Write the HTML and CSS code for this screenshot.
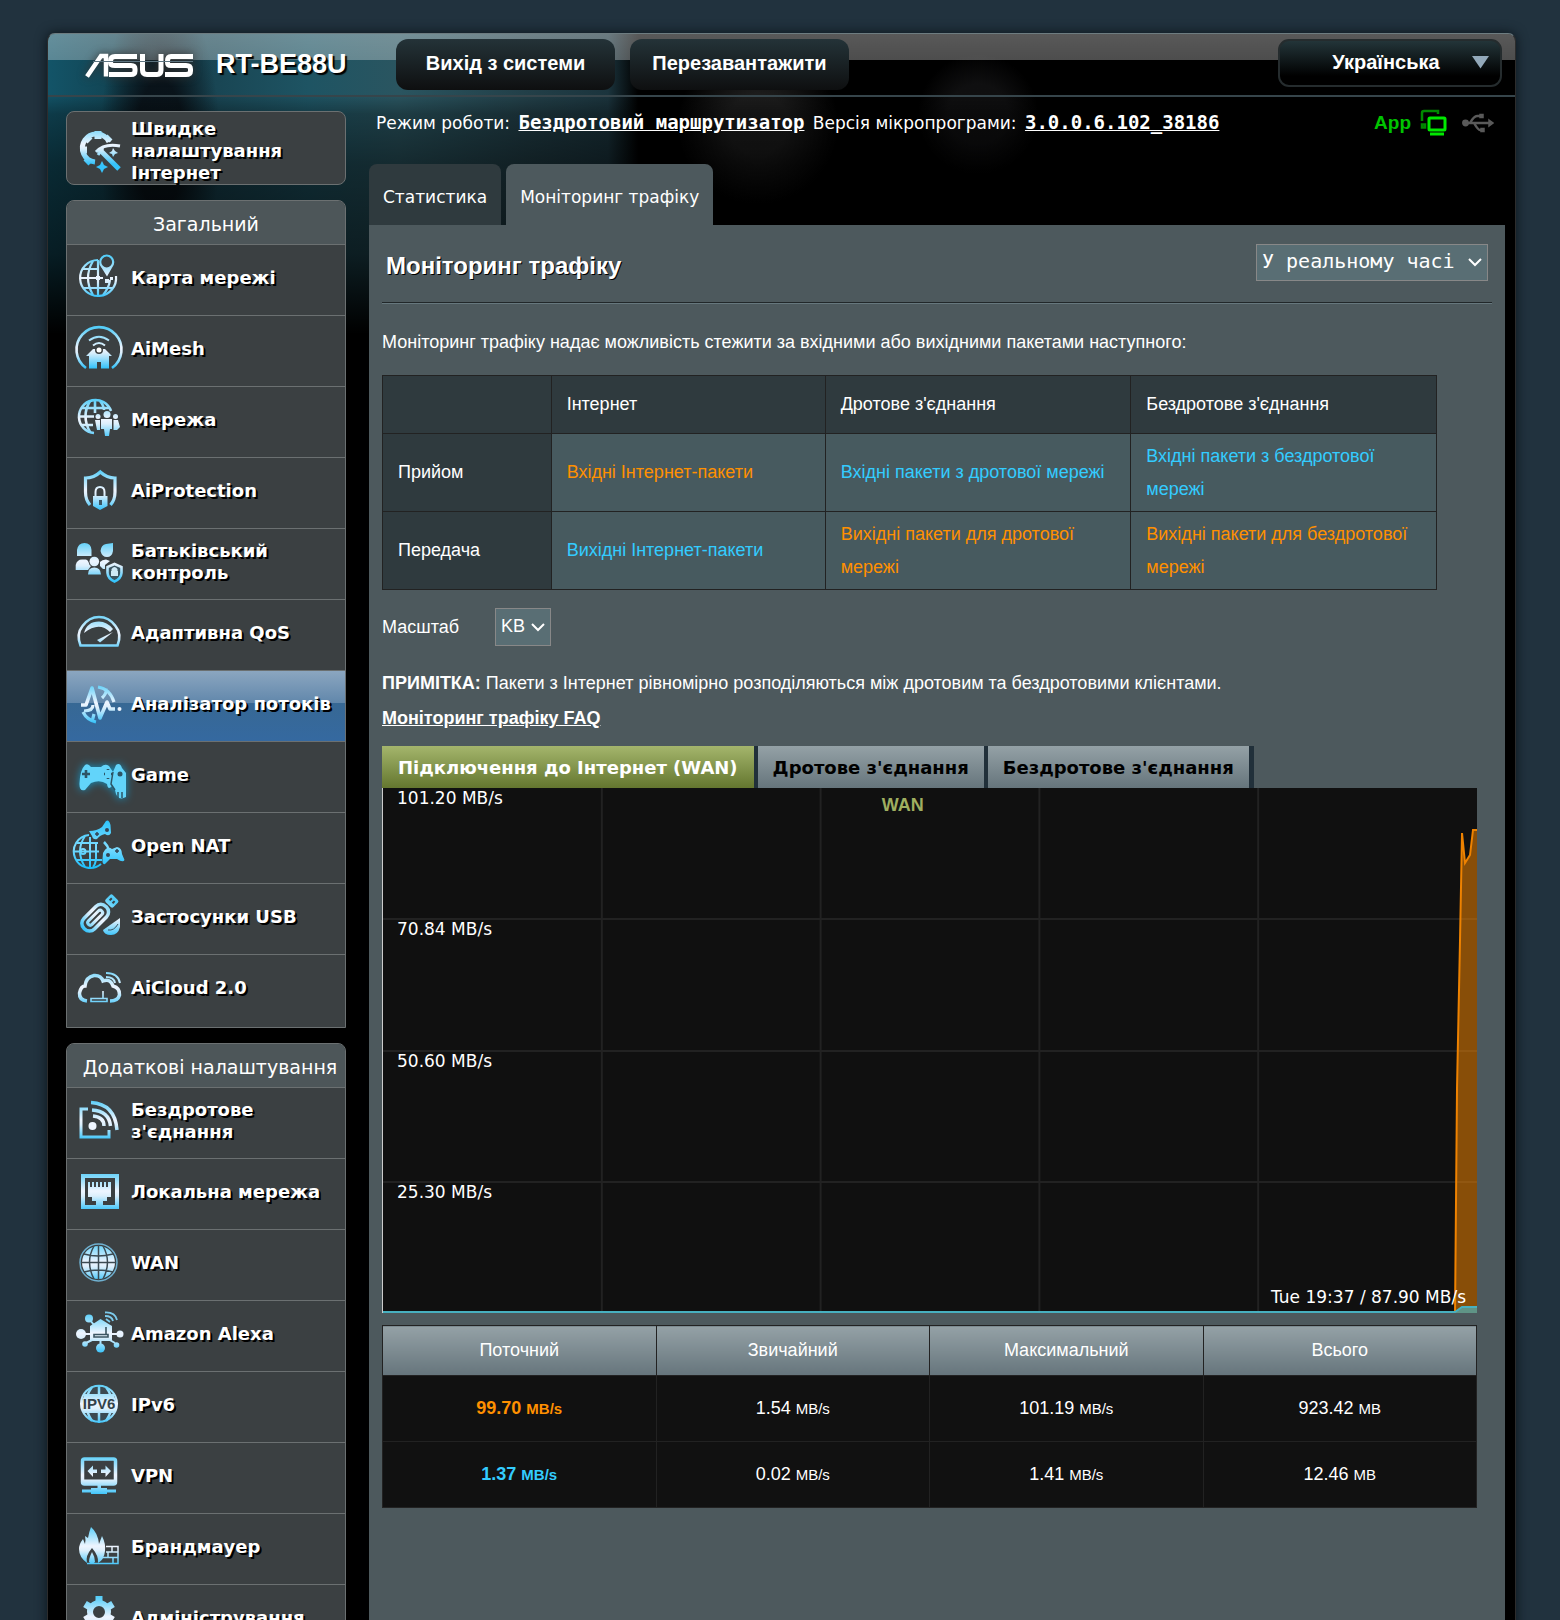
FILE: index.html
```html
<!DOCTYPE html>
<html lang="uk">
<head>
<meta charset="utf-8">
<meta name="viewport" content="width=device-width, initial-scale=1">
<title>RT-BE88U - Моніторинг трафіку</title>
<link rel="stylesheet" href="styles.css">
</head>
<body>
<svg class="defs" aria-hidden="true">
  <defs>
    <linearGradient id="ice" gradientUnits="userSpaceOnUse" x1="0" y1="12" x2="0" y2="52">
      <stop offset="0" stop-color="#55cdf8"/><stop offset=".5" stop-color="#eef5ff"/><stop offset=".62" stop-color="#dceffc"/><stop offset="1" stop-color="#35c3fb"/>
    </linearGradient>
    <linearGradient id="cyan" gradientUnits="userSpaceOnUse" x1="0" y1="8" x2="0" y2="56">
      <stop offset="0" stop-color="#2fc4fb"/><stop offset=".55" stop-color="#7ddcff"/><stop offset="1" stop-color="#16bdfb"/>
    </linearGradient>
  </defs>
</svg>
<div class="frame">
  <header class="topbar">
    <svg class="logo" viewBox="0 0 110 26" role="img" aria-label="ASUS" fill="none" stroke="#fff" stroke-width="5">
      <path d="M2 23.500 16 3H21V23.500" stroke-width="4.500"/>
      <path d="M52 3.500H30Q25.500 3.500 25.500 8V9.500Q25.500 12.500 30 12.500H46Q50 12.500 50 16V18Q50 21.500 46 21.500H24"/>
      <path d="M57.500 1V17Q57.500 21.500 62 21.500H72Q76 21.500 76 17V1"/>
      <path d="M108 3.500H86Q82.500 3.500 82.500 8V9.500Q82.500 12.500 86 12.500H101Q105.500 12.500 105.500 16V18Q105.500 21.500 101 21.500H80"/>
      <path d="M8 8.500H108" stroke="#5c7480" stroke-width="1"/>
    </svg>
    <h1 class="model">RT-BE88U</h1>
    <button class="topbtn" type="button">Вихід з системи</button>
    <button class="topbtn" type="button">Перезавантажити</button>
    <button class="lang" type="button"><span>Українська</span><svg width="17" height="13" viewBox="0 0 17 13" aria-hidden="true"><path d="M0 0H17L8.500 12.500Z" fill="#93a9ba"/></svg></button>
  </header>

  <div class="columns">
    <aside class="sidebar">
      <a class="item quick" href="#"><svg class="icon" viewBox="0 0 56 72"><g fill="none" stroke="url(#ice)"><path d="M37 30A14 14 0 1 0 23 50" stroke-width="5"/><path d="M26 19V27M14 25 18 29M9 38H15M14 51 18 47M38 25 35 28" stroke-width="7"/><path d="M28 38 47 57" stroke-width="5"/><path d="M24 40Q32 31 48 34M31 36 26 43" stroke-width="3"/></g><path d="M30 49 32 53 36 55 32 57 30 61 28 57 24 55 28 53ZM41 36 43 39 46 41 43 42 41 45 40 42 37 41 40 39Z" fill="url(#ice)"/></svg><span>Швидке налаштування Інтернет</span></a>

      <nav class="menu" aria-labelledby="m1">
        <h2 id="m1">Загальний</h2>
        <a class="item" href="#"><svg class="icon" viewBox="0 0 56 70"><g fill="none" stroke="url(#ice)" stroke-width="2.200"><path d="M26 15A18 18 0 1 0 44 31"/><path d="M8 33H31M11 24H27M12 43H41M26 15V51M21 16Q11 33 21 50M31 50Q37 43 38 35"/><circle cx="34.700" cy="17" r="6.500"/></g><path d="M28.500 21Q34.700 27 41 21L35 31.500Z" fill="url(#ice)"/><path d="M33 34h4v4h-4zM24 31h4v4h-4zM38 32h3v3h-3z" fill="url(#ice)"/></svg><span>Карта мережі</span></a>
        <a class="item" href="#"><svg class="icon" viewBox="0 0 56 70"><g fill="none" stroke="url(#ice)" stroke-width="2.600"><path d="M14 52A22.500 22.500 0 1 1 40 52"/><path d="M17 24.500Q27 17 37 24.500M21 29.500Q27 24.500 33 29.500" stroke-width="2"/></g><path d="M14 40 21 33H33L40 40H37V52.500H29V46H25V52.500H17V40Z" fill="url(#ice)"/><circle cx="27" cy="34" r="4" fill="#3b4042"/><circle cx="27" cy="34" r="2.500" fill="#fff"/></svg><span>AiMesh</span></a>
        <a class="item" href="#"><svg class="icon" viewBox="0 0 56 70"><g fill="none" stroke="url(#ice)" stroke-width="2.600"><path d="M39 24A16.500 16.500 0 1 0 22 46"/><path d="M7 29.500H22M10 21H37M10 38H21M23 13V26M18 14Q9 29 18 45M28 14Q32 19 32 23"/></g><g fill="url(#ice)"><circle cx="35" cy="27.500" r="3.500"/><circle cx="26" cy="29.500" r="2.500"/><circle cx="43.500" cy="29.500" r="2.500"/><path d="M29 32H40V42H38L37 49H33L32 42H29ZM23 33H28V43H25ZM41.500 33H46L48 40 45 43H41.500Z"/></g></svg><span>Мережа</span></a>
        <a class="item" href="#"><svg class="icon" viewBox="0 0 56 70"><g fill="none" stroke="url(#ice)" stroke-width="3.200"><path d="M18 47Q13.500 42 13.500 34V20Q22 20 28.300 14 35 20 43 20V34Q43 42 38.500 47"/><path d="M23.500 39V34Q23.500 29 28 29T32.500 34V39" stroke-width="2"/></g><path d="M21 38H35.500V48L28 52 21 48Z" fill="url(#ice)"/><path d="M27 42h3v5h-3z" fill="#3b5562"/></svg><span>AiProtection</span></a>
        <a class="item" href="#"><svg class="icon" viewBox="0 0 56 70"><g fill="url(#ice)"><path d="M5 27V21Q6 14 12.500 14T19.500 21V27ZM28.500 22Q29 16 34 15L41 14V22Q40 28 35 28T28.500 22ZM3.700 41V36Q5 30.500 10 30.500H14Q16 31 16.500 33 17 36 19 37L16 41ZM28 33Q30 30.500 34 30.500L38 32 33 36V40H31L28 37Z"/><circle cx="22.300" cy="32.500" r="4.800"/><path d="M16 45.500Q16 38.500 22.300 38.500T29 45.500Z"/></g><path d="M42.500 35 49.500 38V44Q49 50 42.500 52.500 36 50 35.500 44V38Z" fill="#3b5562" stroke="url(#ice)" stroke-width="2.600"/><path d="M39.500 42V40Q42.500 36 45.500 40V42H46V47H39V42Z" fill="#cfe9f6"/></svg><span>Батьківський контроль</span></a>
        <a class="item" href="#"><svg class="icon" viewBox="0 0 56 70"><path d="M8.500 45.500Q4 34 10.500 26 17 17 27 17T43.500 26Q50 34 45.500 45.500Z" fill="none" stroke="url(#ice)" stroke-width="2.600"/><path d="M12 33Q15 21.500 27 21.500 35 21.500 41 29L38 32Q27 21 12 33Z" fill="url(#ice)"/><path d="M25 40 41 32 28 42.500Z" fill="url(#ice)"/></svg><span>Адаптивна QoS</span></a>
        <a class="item current" href="#" aria-current="page"><svg class="icon" viewBox="0 0 56 70"><g fill="none" stroke="url(#ice)"><path d="M9 34H14L20 17 28 47 35 31 38 38H43" stroke-width="3.600" stroke-linejoin="round"/><path d="M26 16Q38 18 42 31M30 27Q35 22 34 18M11 41Q15 49 24 51M12 40Q21 40 21 34M20 51 22 43" stroke-width="3.200"/></g><circle cx="47.500" cy="38" r="2" fill="#eef5ff"/></svg><span>Аналізатор потоків</span></a>
        <a class="item" href="#"><svg class="icon glow" viewBox="0 0 56 70"><path d="M13 23Q16 21 19 25H29Q33 21 37 24L41 30 44 23Q48 20 50 26L54 31V55Q45 60 43 48L40 44Q36 49 35 42 28 37 19 41L13 48Q7 50 7.500 41 8 28 13 23Z" fill="#62d4fa"/><path d="M14 28V36M10 32H18M36 27V28M36 36V37M32 32H33M39 32H40" stroke="#2d5465" stroke-width="2.600"/><circle cx="48" cy="32" r="2.500" fill="#2d5465"/><path d="M41 30 39 42 43 48M46 50V56M50 50V56" stroke="#2d5465" stroke-width="1.500" fill="none"/></svg><span>Game</span></a>
        <a class="item" href="#"><svg class="icon" viewBox="0 0 56 70"><g fill="none" stroke="url(#cyan)" stroke-width="2"><path d="M17 22A16.500 16.500 0 1 0 29 51"/><path d="M2 38.500H27M5 30H26M5 47H30M18 24V55M13 23Q3 38 13 54M24 30V47Q23 52 21 54"/><path d="M32 29Q36 33 37 37" stroke-width="2.500"/><circle cx="11" cy="38.500" r="2.500"/></g><g fill="url(#cyan)"><path d="M17 18Q25 18 30 14L34 8Q37 6 38.500 12L39 20Q37 24 33 21 28 22 25 26 21 27 20 23L17 18Z"/><path d="M31 40Q35 32 40 36L45 34Q50 35 50 41L52.500 47Q51 50 45 46H38L33 51Q30 52 30.500 46Z"/></g><path d="M25 19V23M23 21H27M45 36V40M43 38H47" stroke="#345" stroke-width="1.500"/><circle cx="35" cy="17" r="2" fill="#345"/><circle cx="36" cy="42" r="2" fill="#345"/></svg><span>Open NAT</span></a>
        <a class="item" href="#"><svg class="icon" viewBox="0 0 56 70"><g transform="rotate(45 26 33)"><rect x="17" y="20" width="15" height="31" rx="7" fill="none" stroke="url(#ice)" stroke-width="3.500"/><rect x="22" y="26" width="5" height="19" rx="2.500" fill="none" stroke="url(#ice)" stroke-width="3"/><rect x="19" y="7" width="11" height="10" rx="2" fill="url(#ice)"/><path d="M22.500 10V13M26.500 10V13" stroke="#3b4042" stroke-width="2"/></g><path d="M48 34V43Q46 51 39 51 32 51 31 46Z" fill="url(#ice)"/><path d="M46 40Q42 47 36 46" fill="none" stroke="#3b5562"/></svg><span>Застосунки USB</span></a>
        <a class="item" href="#"><svg class="icon" viewBox="0 0 56 70"><g fill="none" stroke="url(#ice)"><path d="M15 46Q7 45 7.500 38 9 31 13 31 14 22 22 20.500 29 20 31 26 38 23 41 31 48 33 47.500 40 46 46 38 46" stroke-width="3.500"/><path d="M34 18Q46 18 48 28M34 22Q42 22 43 28" stroke-width="2"/><path d="M19 43.500H35V46.500H19ZM31 36V43" stroke-width="1.600"/></g></svg><span>AiCloud 2.0</span></a>
      </nav>

      <nav class="menu" aria-labelledby="m2">
        <h2 id="m2" class="wide">Додаткові налаштування</h2>
        <a class="item" href="#"><svg class="icon" viewBox="0 0 56 70"><g fill="none" stroke="url(#ice)" stroke-width="3"><path d="M16 21H9V49H37V42"/><path d="M19 14.500Q43 16 45 42M20 22Q37 23 38.500 38M21 28Q32 29 32 38" stroke-width="3.500"/></g><circle cx="20.500" cy="38" r="4" fill="#eef5ff"/></svg><span>Бездротове з'єднання</span></a>
        <a class="item" href="#"><svg class="icon" viewBox="0 0 56 70"><rect x="11" y="17" width="34" height="31" fill="none" stroke="url(#ice)" stroke-width="4"/><path d="M16 23H18V28H20V23H22V28H24V23H26V28H28V23H30V28H32V23H34V28H36V23H39V38H35V42H31V46H24V42H20V38H16Z" fill="url(#ice)"/></svg><span>Локальна мережа</span></a>
        <a class="item" href="#"><svg class="icon" viewBox="0 0 56 70"><circle cx="26.500" cy="32.500" r="18.500" fill="none" stroke="#6fb0d0" stroke-width="1.500"/><circle cx="26.500" cy="32.500" r="16.500" fill="url(#ice)"/><path d="M9 32.500H44M12 24Q26 28 41 24M12 42Q26 38 41 42M26.500 15V50M22 16Q13 32 22 49M31 16Q40 32 31 49" fill="none" stroke="#3b4a52" stroke-width="1.500"/></svg><span>WAN</span></a>
        <a class="item" href="#"><svg class="icon" viewBox="0 0 56 70"><path d="M18 19 22 24M10 33H18M40 33H47M14 42 22 38M28.500 40V46M43 42 36 38" stroke="url(#ice)" stroke-width="2" fill="none"/><path d="M18 25 28.500 18 40 25V40H18Z" fill="url(#ice)"/><g fill="url(#ice)"><circle cx="17" cy="17.500" r="4"/><circle cx="9" cy="33" r="5"/><circle cx="48" cy="33" r="3.500"/><circle cx="13" cy="43" r="2.800"/><circle cx="28.500" cy="47" r="4.500"/><circle cx="44.500" cy="44" r="2.800"/></g><path d="M22 33.500H36V36H22ZM34 26V33" fill="none" stroke="#3b5562" stroke-width="1.600"/><path d="M33 11.500Q43 11 45 19M33 15Q40 15 41 20M34 18 38 21" stroke="#7ccbed" stroke-width="1.800" fill="none"/></svg><span>Amazon Alexa</span></a>
        <a class="item" href="#"><svg class="icon" viewBox="0 0 56 70"><circle cx="27" cy="31.700" r="18" fill="#3b4a52" stroke="url(#ice)" stroke-width="2"/><path d="M27 13V51M20 15Q8 31 20 49M34 15Q46 31 34 49" fill="none" stroke="url(#ice)" stroke-width="2.500"/><path d="M12 22H42V24Q47 32 42 41H12Q7 32 12 24Z" fill="url(#ice)"/><text x="27" y="37" text-anchor="middle" class="v6">IPV6</text></svg><span>IPv6</span></a>
        <a class="item" href="#"><svg class="icon" viewBox="0 0 56 70"><rect x="10.500" y="16" width="33" height="25" rx="2" fill="none" stroke="url(#ice)" stroke-width="3.500"/><path d="M11 36.500H44V40H11ZM15.500 28 21 22.500V26.500H25V30H21V34ZM39 28 33.500 22.500V26.500H29V30H33.500V34ZM25.500 42H29V45H35V46.500H44V49.500H35V51H19V49.500H10V46.500H19V45H25.500Z" fill="url(#ice)"/></svg><span>VPN</span></a>
        <a class="item" href="#"><svg class="icon" viewBox="0 0 56 70"><path d="M15 49Q7 43 7 35 7 30 11 25L13 30Q14 26 13 22L16 24Q17 18 19 13 26 19 27 30L30 22Q34 30 33 37 32 46 26 49 27 42 20 34 13 42 15 49Z" fill="url(#ice)"/><path d="M20 38Q17 44 17 48 20 51 23 48 23 43 20 38Z" fill="url(#ice)"/><path d="M34 32.500H46V49.500H15M34 38H46M30 43.500H46M40 32V38M36 38V44M41 44V49" fill="none" stroke="url(#ice)" stroke-width="1.500"/></svg><span>Брандмауер</span></a>
        <a class="item" href="#"><svg class="icon" viewBox="0 0 56 70"><circle cx="27" cy="27" r="9" fill="none" stroke="url(#ice)" stroke-width="6"/><path d="M27 11V17M13 19 18 22M36 22 41 19M13 35 18 32M36 32 41 35" stroke="url(#ice)" stroke-width="7"/></svg><span>Адміністрування</span></a>
      </nav>
    </aside>

    <main class="main">
      <div class="status">
        <p>Режим роботи: <a href="#">Бездротовий маршрутизатор</a> Версія мікропрограми: <a href="#">3.0.0.6.102_38186</a></p>
        <a class="app" href="#">App</a>
        <svg width="28" height="28" viewBox="0 0 28 28" fill="none" stroke="#00b400" aria-hidden="true"><path d="M18 5V2H4Q2 2 2 4V12M2 15.500H5V18.500H2Z" stroke-width="2.500" stroke="#008800"/><rect x="9" y="9" width="16" height="12" rx="1" stroke="#00e800" stroke-width="3"/><path d="M10 25H24" stroke="#00e800" stroke-width="3"/></svg>
        <svg width="32" height="20" viewBox="0 0 32 20" fill="none" stroke="#5a5a5a" stroke-width="2.500" aria-hidden="true"><circle cx="3.500" cy="10" r="2.200" fill="#5a5a5a"/><path d="M4 10H27M8 10Q12 3 15 3H18M12 10Q16 17 18 17H20"/><path d="M27 7 31 10 27 13ZM18 1.500H21V4.500H18ZM19 15.500H22V18.500H19Z" fill="#5a5a5a" stroke-width="1.500"/></svg>
      </div>

      <nav class="tabs">
        <a href="#">Статистика</a>
        <a class="on" href="#" aria-current="page">Моніторинг трафіку</a>
      </nav>

      <section class="panel">
        <div class="head">
          <h2>Моніторинг трафіку</h2>
          <select class="period" aria-label="Період"><option>У реальному часі</option></select>
        </div>
        <p class="intro">Моніторинг трафіку надає можливість стежити за вхідними або вихідними пакетами наступного:</p>
        <table class="legend">
          <colgroup><col class="c1"><col class="c2"><col class="c3"><col class="c4"></colgroup>
          <thead><tr><th></th><th scope="col">Інтернет</th><th scope="col">Дротове з'єднання</th><th scope="col">Бездротове з'єднання</th></tr></thead>
          <tbody>
            <tr><th scope="row">Прийом</th><td class="orange">Вхідні Інтернет-пакети</td><td class="blue">Вхідні пакети з дротової мережі</td><td class="blue">Вхідні пакети з бездротової мережі</td></tr>
            <tr><th scope="row">Передача</th><td class="blue">Вихідні Інтернет-пакети</td><td class="orange">Вихідні пакети для дротової мережі</td><td class="orange">Вихідні пакети для бездротової мережі</td></tr>
          </tbody>
        </table>
        <div class="scale">
          <label for="scale">Масштаб</label>
          <select id="scale"><option>KB</option></select>
        </div>
        <p class="note"><b>ПРИМІТКА:</b> Пакети з Інтернет рівномірно розподіляються між дротовим та бездротовими клієнтами.</p>
        <p class="note"><a href="#">Моніторинг трафіку FAQ</a></p>

        <div class="sources">
          <button class="on" type="button">Підключення до Інтернет (WAN)</button>
          <button type="button">Дротове з'єднання</button>
          <button type="button">Бездротове з'єднання</button>
        </div>
        <div class="chart">
          <svg viewBox="0 0 1095 525" preserveAspectRatio="none" aria-hidden="true">
            <path d="M219 0V525M438 0V525M657 0V525M876 0V525M0 131H1095M0 263H1095M0 394H1095" stroke="#222" stroke-width="2"/>
            <path d="M1073 525 1075 300 1078 152 1080 45 1083 75 1088 67 1091 42H1095V525Z" fill="#ff8c00" fill-opacity=".5"/>
            <path d="M1073 525 1075 300 1078 152 1080 45 1083 75 1088 67 1091 42H1095" fill="none" stroke="#ee8200" stroke-width="2"/>
            <path d="M1073 525 1079 519H1095V525Z" fill="#5f9486"/>
            <path d="M0 524H1073L1080 519H1095" fill="none" stroke="#47b0c0" stroke-width="2"/>
          </svg>
          <ul class="ticks"><li>101.20 MB/s</li><li>70.84 MB/s</li><li>50.60 MB/s</li><li>25.30 MB/s</li></ul>
          <span class="name">WAN</span>
          <span class="reading">Tue 19:37 / 87.90 MB/s</span>
        </div>
        <table class="totals">
          <thead><tr><th scope="col">Поточний</th><th scope="col">Звичайний</th><th scope="col">Максимальний</th><th scope="col">Всього</th></tr></thead>
          <tbody>
            <tr><td class="orange">99.70 <small>MB/s</small></td><td>1.54 <small>MB/s</small></td><td>101.19 <small>MB/s</small></td><td>923.42 <small>MB</small></td></tr>
            <tr><td class="blue">1.37 <small>MB/s</small></td><td>0.02 <small>MB/s</small></td><td>1.41 <small>MB/s</small></td><td>12.46 <small>MB</small></td></tr>
          </tbody>
        </table>
      </section>
    </main>
  </div>
</div>
</body>
</html>
```
FILE: styles.css
```css
* { box-sizing: border-box; }
body {
  margin: 0;
  height: 100vh;
  overflow: hidden;
  padding: 33px 44px 0 47px;
  background: #21323e;
  color: #fff;
  font: 18px "Liberation Sans", Arial, sans-serif;
}
h1, h2, p, ul { margin: 0; padding: 0; }
a { color: inherit; }
.defs { position: absolute; width: 0; height: 0; }

.frame {
  min-height: 100%;
  border: 1px solid #2c2c2c;
  border-top-color: #6d7c80;
  border-bottom: 0;
  border-radius: 8px 8px 0 0;
  box-shadow: 0 0 12px #0b141a;
  overflow: hidden;
  background:
    linear-gradient(transparent 60px, rgba(0, 0, 0, .3) 80px, rgba(0, 0, 0, .5) 130px, rgba(0, 0, 0, .65) 220px, #000 300px),
    radial-gradient(ellipse 60px 160px at 112px 110px, rgba(8, 14, 20, .9) 40%, transparent),
    radial-gradient(circle at 710px 90px, rgba(40, 40, 40, .7) 30px, transparent 80px),
    radial-gradient(circle at 930px 80px, rgba(30, 30, 32, .5) 30px, transparent 60px),
    linear-gradient(90deg, #135468, #12414f 80px, #194654 170px, #1e5463 260px, #2a5560 350px, #223f48 480px, #1b343d 560px, #000 590px);
}

/* top bar */
.topbar {
  display: flex;
  align-items: flex-start;
  height: 63px;
  padding: 5px 13px 0 36px;
  border-bottom: 2px solid #36454b;
  background: linear-gradient(rgba(255, 255, 255, .35), rgba(255, 255, 255, .3)) 0 0 / 100% 26px no-repeat;
}
.logo { width: 110px; height: 26px; margin: 14px 21px 0 1px; filter: drop-shadow(0 0 4px #333); }
.model { width: 180px; margin-top: 10px; font-size: 27px; line-height: 31px; text-shadow: 2px 2px 1px #000; }
.topbtn {
  width: 219px;
  height: 51px;
  margin-right: 15px;
  padding: 0 0 3px;
  border: 0;
  border-radius: 12px;
  background: linear-gradient(#243338, #0e0f10);
  color: #fff;
  font: bold 20px "Liberation Sans", Arial, sans-serif;
}
.lang {
  display: flex;
  align-items: center;
  width: 224px;
  height: 48px;
  margin-left: auto;
  padding: 0 11px 2px 20px;
  border: 2px solid #252c2e;
  border-radius: 11px;
  background: linear-gradient(#233539, #000 80%);
  color: #fff;
  font: bold 20px "Liberation Sans", Arial, sans-serif;
}
.lang span { flex: 1; text-align: center; }

.columns { display: flex; align-items: flex-start; gap: 23px; padding: 14px 10px 0 18px; }

/* side menu */
.sidebar { flex: none; width: 280px; display: flex; flex-direction: column; gap: 15px; }
.menu { border: 1px solid #6b7071; border-radius: 8px 8px 0 0; overflow: hidden; background: #3b4042; }
.menu h2 {
  height: 43px;
  background: #4d5659;
  font: 19px/47px "DejaVu Sans", Verdana, sans-serif;
  text-align: center;
}
.menu h2.wide { padding-left: 8px; white-space: nowrap; }
.item {
  display: flex;
  align-items: center;
  height: 71px;
  padding: 0 4px 4px 64px;
  border-top: 1px solid #6b7071;
  position: relative;
  font: bold 18px/22px "DejaVu Sans", Verdana, sans-serif;
  text-decoration: none;
  text-shadow: 2px 2px 0 #000;
}
.menu .item:last-child { height: 73px; padding-bottom: 6px; }
.item .icon { position: absolute; left: 5px; top: 0; width: 56px; height: 70px; }
.glow { filter: drop-shadow(0 0 4px #1592c0); }
.v6 { font: bold 15px "Liberation Sans", Arial, sans-serif; fill: #33424a; text-shadow: none; }
.current { background: linear-gradient(#8ba6c0, #6187ab 32px, #376894 32px, #3569a0); }
.quick { height: 74px; padding: 5px 4px 0 64px; border: 1px solid #6b7071; border-radius: 8px; background: #3b4042; }
.quick .icon { top: 0; height: 72px; }

/* main column */
.main { flex: 1; min-width: 0; }
.status { display: flex; align-items: center; height: 24px; padding: 0 11px 0 7px; }
.status p { flex: 1; padding-bottom: 2px; white-space: nowrap; font: 17px/22px "DejaVu Sans", Verdana, sans-serif; }
.status p a { margin: 0 3px; font: bold 19px/22px "DejaVu Sans Mono", monospace; }
.app { margin-right: 9px; color: #00c400; font-weight: bold; font-size: 19px; text-decoration: none; }
.status svg + svg { margin-left: 14px; }
.tabs { display: flex; gap: 5px; margin-top: 29px; }
.tabs a {
  height: 61px;
  padding: 0 14px;
  border-radius: 8px 8px 0 0;
  background: #2f3a3e;
  font: 17px/67px "DejaVu Sans", Verdana, sans-serif;
  text-decoration: none;
}
.tabs a.on { background: #4d595d; }

.panel { min-height: 1500px; padding: 19px 13px 0; background: #4d595d; }
.head {
  display: flex;
  align-items: flex-start;
  justify-content: space-between;
  height: 60px;
  padding: 0 4px;
  border-bottom: 2px groove #66777d;
}
.head h2 { margin-top: 8px; font-size: 24px; line-height: 28px; text-shadow: 1px 1px 0 #000; }
select {
  appearance: none;
  height: 37px;
  padding: 0 5px 3px;
  border: 1px solid #888;
  border-radius: 0;
  background: #596e74 url("data:image/svg+xml,%3Csvg xmlns='http://www.w3.org/2000/svg' width='14' height='9'%3E%3Cpath d='M1 1 7 7 13 1' fill='none' stroke='white' stroke-width='2'/%3E%3C/svg%3E") no-repeat right 5px center;
  color: #fff;
  font: 18px "Liberation Sans", Arial, sans-serif;
}
.period { width: 232px; font: 20px "DejaVu Sans Mono", monospace; }
.intro { padding-top: 27px; line-height: 22px; }

.legend { width: calc(100% - 55px); margin: 22px 0 0; border-collapse: collapse; table-layout: fixed; background: #475a5f; }
.legend .c1 { width: 16%; }
.legend .c2 { width: 26%; }
.legend .c3 { width: 29%; }
.legend .c4 { width: 29%; }
.legend th, .legend td { height: 78px; padding: 0 15px; border: 1px solid #222; line-height: 33px; text-align: left; font-weight: normal; }
.legend th { background: #2f3a3e; }
.legend thead th { height: 58px; }
.orange { color: #ff9000; }
.blue { color: #33ccff; }

.scale { display: flex; margin: 18px 0 25px; line-height: 38px; }
.scale label { width: 113px; }
.scale select { width: 56px; height: 38px; }
.note { line-height: 24px; margin-bottom: 11px; }
.note a { font-weight: bold; }

.sources { display: flex; width: max-content; gap: 4px; margin-top: 16px; padding-right: 5px; background: #21303a; }
.sources button {
  height: 42px;
  padding: 0 15px;
  border: 0;
  background: linear-gradient(#94a1a6, #66757c);
  color: #000;
  font: bold 18px "DejaVu Sans", Verdana, sans-serif;
}
.sources .on { padding: 0 16px; background: linear-gradient(#a4b56c, #64762f); color: #fff; }
.chart { position: relative; height: 525px; margin-right: 15px; background: #101010; border-left: 1px solid #ccc; font: 17px/20px "DejaVu Sans", Verdana, sans-serif; }
.chart svg { display: block; width: 100%; height: 100%; }
.ticks { position: absolute; inset: 0 auto 0 14px; list-style: none; display: grid; grid-template-rows: repeat(4, 1fr); }
.name { position: absolute; top: 7px; left: 0; width: 95%; text-align: center; color: #9fae60; font: bold 18px/20px "Liberation Sans", Arial, sans-serif; }
.reading { position: absolute; right: 11px; bottom: 6px; }

.totals { width: calc(100% - 15px); margin: 12px 0 0; border-collapse: collapse; table-layout: fixed; background: #111; text-align: center; }
.totals th, .totals td { height: 66px; padding: 0; border: 1px solid #222; }
.totals th { height: 50px; background: linear-gradient(#94a1a6, #66757c); font-weight: normal; }
.totals small { font-size: 15px; }
.totals .orange, .totals .blue { font-weight: bold; }
```
